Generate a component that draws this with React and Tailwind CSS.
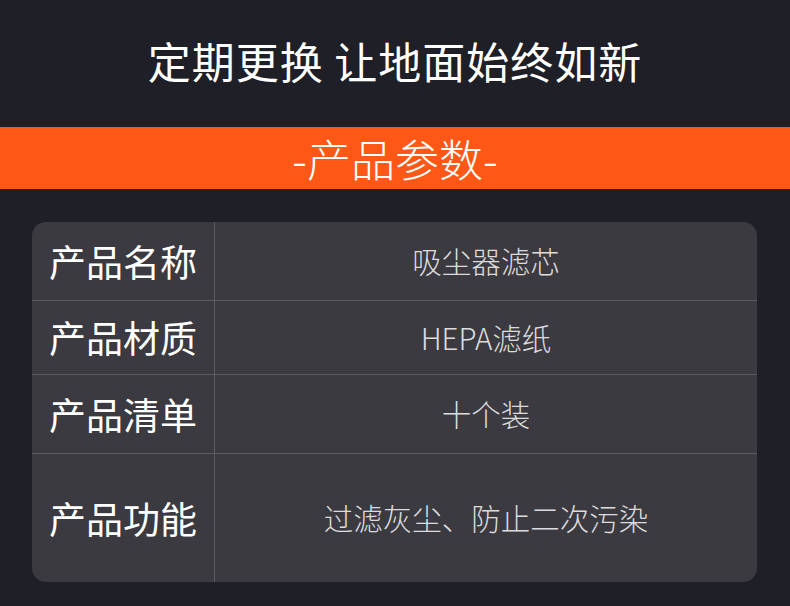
import React from 'react';

const rows = [
  { label: '产品名称', value: '吸尘器滤芯', h: 'h-[78px]' },
  { label: '产品材质', value: 'HEPA滤纸', h: 'h-[74px]' },
  { label: '产品清单', value: '十个装', h: 'h-[79px]' },
  { label: '产品功能', value: '过滤灰尘、防止二次污染', h: 'h-[129px]' },
];

const App = () => {
  return (
    <div
      className="w-[790px] h-[606px] bg-[#1f1f27] overflow-hidden"
      style={{ fontFamily: '"Noto Sans CJK SC", "Noto Sans", sans-serif' }}
    >
      {/* Heading */}
      <div className="h-[127px] flex items-center justify-center">
        <h1 className="text-[43px] font-normal text-white tracking-[1px] leading-none -mt-[6px]">
          定期更换 让地面始终如新
        </h1>
      </div>

      {/* Orange band */}
      <div className="h-[62px] bg-[#ff5716] flex items-center justify-center">
        <h2 className="text-[44px] font-light text-white leading-none">-产品参数-</h2>
      </div>

      {/* Spec table */}
      <div className="px-[32px] pt-[33px]">
        <div className="w-[725px] bg-[#3b3a40] rounded-[14px] overflow-hidden">
          {rows.map((row, i) => (
            <div
              key={row.label}
              className={`flex ${row.h} ${i > 0 ? 'border-t border-[#5c5b61]' : ''}`}
            >
              <div className="w-[183px] shrink-0 flex items-center justify-center border-r border-[#5c5b61] text-white text-[37px] leading-none">
                {row.label}
              </div>
              <div className="flex-1 flex items-center justify-center text-[#dcdcde] text-[29.5px] font-light leading-none">
                {row.value}
              </div>
            </div>
          ))}
        </div>
      </div>
    </div>
  );
};

export default App;
